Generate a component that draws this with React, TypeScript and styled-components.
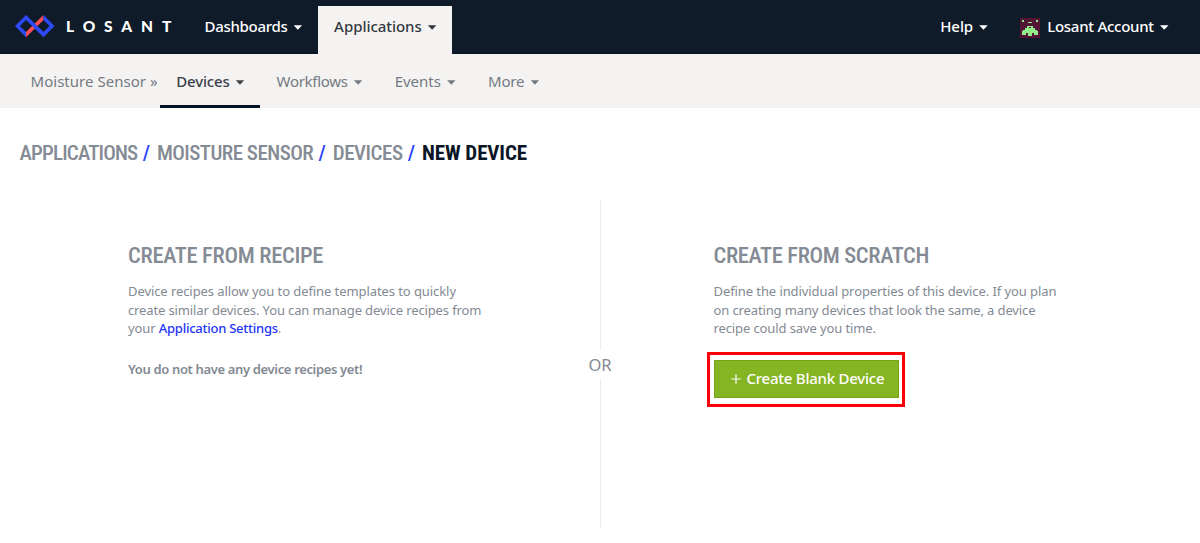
import React from "react";
import styled, { createGlobalStyle } from "styled-components";

const GlobalStyle = createGlobalStyle`
  *, *::before, *::after { box-sizing: border-box; }
  body {
    margin: 0;
    background: #fff;
    color: #838a93;
    font-family: "Noto Sans", "Open Sans", sans-serif;
    font-size: 13px;
  }
  a { color: inherit; text-decoration: none; }
`;

const Page = styled.div`
  display: flex;
  flex-direction: column;
  height: 543px;
  overflow: hidden;
`;

const Header = styled.header`
  display: flex;
  align-items: flex-end;
  height: 54px;
  flex: none;
  padding: 0 15.5px 0 15px;
  background: linear-gradient(#0f1b29 52.5px, #081625 52.5px);
`;

const Brand = styled.a`
  display: flex;
  align-items: center;
  width: 173.5px;
  height: 54px;
  padding-bottom: 1px;
  color: #fff;
`;

const Wordmark = styled.span`
  margin: 0 0 1px 11px;
  font-family: Lato, sans-serif;
  font-size: 15.5px;
  font-weight: 900;
  line-height: 20px;
  letter-spacing: 8.9px;
`;

const NavItem = styled.a<{ $active?: boolean }>`
  display: flex;
  align-items: center;
  height: 48px;
  padding: 0 16px 8px;
  color: ${(p) => (p.$active ? "#32383f" : "#fff")};
  background: ${(p) => (p.$active ? "#f5f3f2" : "transparent")};
`;

const Spacer = styled.div`
  flex: 1;
`;

const Label = styled.span<{ $track?: number; $strong?: boolean }>`
  font-size: 15px;
  line-height: 20px;
  font-weight: ${(p) => (p.$strong ? 500 : 400)};
  letter-spacing: ${(p) => p.$track ?? 0}px;
  white-space: nowrap;
`;

const Caret = styled.i`
  width: 8.5px;
  height: 4.5px;
  margin: 3px 0 0 6.2px;
  background: currentColor;
  clip-path: polygon(0 0, 100% 0, 50% 100%);
`;

const Avatar = styled.svg`
  width: 20px;
  height: 20px;
  margin: 4px 7.5px 0 0;
`;

const SubNav = styled.nav`
  display: flex;
  height: 54px;
  flex: none;
  padding-left: 30.5px;
  background: #f5f3f2;
  color: #747a82;
`;

const Context = styled.a`
  display: flex;
  align-items: center;
  width: 129.5px;
`;

const SubItem = styled.a<{ $active?: boolean }>`
  display: flex;
  align-items: center;
  padding: 3px 16px 0 16.3px;
  border-bottom: 3px solid ${(p) => (p.$active ? "#061324" : "transparent")};
  color: ${(p) => (p.$active ? "#3c4249" : "inherit")};
`;

const Breadcrumbs = styled.nav`
  display: flex;
  flex: none;
  height: 93px;
  padding: 32px 0 0 19.5px;
  font-family: "Roboto Condensed", Roboto, sans-serif;
  font-size: 21px;
  line-height: 26px;
  font-weight: 500;
`;

const Crumb = styled.a<{ $track: number; $current?: boolean }>`
  letter-spacing: ${(p) => p.$track}px;
  color: ${(p) => (p.$current ? "#0b1728" : "#858b94")};
  font-weight: ${(p) => (p.$current ? 700 : 500)};
  white-space: nowrap;
`;

const Slash = styled.span`
  width: 19.5px;
  padding-right: 1.5px;
  text-align: center;
  color: #2440fb;
`;

const Choices = styled.main`
  display: grid;
  grid-template-columns: 442px 60px 1fr;
  height: 327px;
  padding-left: 128px;
`;

const Choice = styled.section<{ $inset?: number }>`
  padding: 41px 0 0 ${(p) => p.$inset ?? 0}px;
`;

const Title = styled.h2<{ $track: number }>`
  margin: 0 0 13px;
  font-family: "Roboto Condensed", Roboto, sans-serif;
  font-size: 22.5px;
  line-height: 27px;
  font-weight: 500;
  letter-spacing: ${(p) => p.$track}px;
  color: #858b94;
`;

const Copy = styled.p`
  margin: 0;
  line-height: 18.57px;
`;

const Line = styled.span<{ $track: number }>`
  display: block;
  letter-spacing: ${(p) => p.$track}px;
  white-space: nowrap;
`;

const TextLink = styled.a`
  color: #1f36fa;
  font-weight: 500;
  letter-spacing: -0.25px;
`;

const Notice = styled.p`
  margin: 22px 0 0;
  font-weight: 600;
  line-height: 19px;
  letter-spacing: -0.35px;
`;

const Divider = styled.div`
  display: flex;
  flex-direction: column;
  align-items: center;
  color: #858b94;
  font-size: 16.5px;
  line-height: 29px;

  &::before, &::after {
    content: "";
    width: 1px;
    flex: 1;
    margin-left: 1px;
    background: #ececee;
  }
`;

const Highlight = styled.div`
  width: 198px;
  height: 55px;
  margin: 14px 0 0 -6.5px;
  padding: 5px 3.5px;
  border: 3px solid #fb0007;
`;

const Button = styled.button`
  display: flex;
  align-items: center;
  width: 185px;
  height: 38px;
  padding: 0 0 1px 16px;
  border: 1px solid #76a31c;
  background: #86b524;
  color: #fff;
  font-family: inherit;
`;

const Plus = styled.svg`
  width: 10px;
  height: 10px;
  margin: 1px 6px 0 0;
`;

const crumbs = [
  { text: "APPLICATIONS", track: -0.83 },
  { text: "MOISTURE SENSOR", track: -0.54 },
  { text: "DEVICES", track: -0.48 },
];

const sections = [
  { text: "Devices", track: -0.18, active: true },
  { text: "Workflows", track: -0.29 },
  { text: "Events", track: 0 },
  { text: "More", track: -0.12 },
];

export default function App() {
  return (
    <Page>
      <GlobalStyle />
      <Header>
        <Brand href="#">
          <svg width="40" height="23" viewBox="0 0 40 23">
            <path d="M11 17.1 28.5 0V5L11 22.3Z" fill="#fb4d55" />
            <path d="M28.5 0 39.5 11 28.5 22.2 11 5 4.9 11 11 17.1V22.3L0 11 11 0 28.5 17.1 34.6 11 28.5 5Z" fill="#2d4bfb" />
          </svg>
          <Wordmark>LOSANT</Wordmark>
        </Brand>
        <NavItem href="#">
          <Label $strong $track={-0.3}>Dashboards</Label>
          <Caret />
        </NavItem>
        <NavItem href="#" $active>
          <Label $strong $track={-0.05}>Applications</Label>
          <Caret />
        </NavItem>
        <Spacer />
        <NavItem href="#">
          <Label $strong $track={-0.1}>Help</Label>
          <Caret />
        </NavItem>
        <NavItem href="#">
          <Avatar viewBox="0 0 20 20" shapeRendering="crispEdges">
            <path d="M0 0h20v20H0z" fill="#521535" />
            <path
              d="M2 2h2v2H2zM16 2h2v2h-2zM8 4h4v1H8zM7 8h6v2h2v2h2v1h1v4h-4v-2h-2v3H8v-3H6v2H2v-4h1v-1h2v-2h2zM9 9v1h2V9z"
              fill="#8fee8a"
              fillRule="evenodd"
            />
          </Avatar>
          <Label $strong $track={-0.27}>Losant Account</Label>
          <Caret />
        </NavItem>
      </Header>

      <SubNav>
        <Context href="#">
          <Label $track={0.03}>Moisture Sensor »</Label>
        </Context>
        {sections.map((s) => (
          <SubItem key={s.text} href="#" $active={s.active}>
            <Label $strong={s.active} $track={s.track}>{s.text}</Label>
            <Caret />
          </SubItem>
        ))}
      </SubNav>

      <Breadcrumbs>
        {crumbs.map((c) => (
          <React.Fragment key={c.text}>
            <Crumb href="#" $track={c.track}>{c.text}</Crumb>
            <Slash>/</Slash>
          </React.Fragment>
        ))}
        <Crumb $track={-0.1} $current>NEW DEVICE</Crumb>
      </Breadcrumbs>

      <Choices>
        <Choice>
          <Title $track={-0.31}>CREATE FROM RECIPE</Title>
          <Copy>
            <Line $track={-0.08}>Device recipes allow you to define templates to quickly</Line>
            <Line $track={-0.125}>create similar devices. You can manage device recipes from</Line>
            <Line $track={-0.1}>
              your <TextLink href="#">Application Settings</TextLink>.
            </Line>
          </Copy>
          <Notice>You do not have any device recipes yet!</Notice>
        </Choice>
        <Divider>OR</Divider>
        <Choice $inset={83.5}>
          <Title $track={-0.35}>CREATE FROM SCRATCH</Title>
          <Copy>
            <Line $track={-0.085}>Define the individual properties of this device. If you plan</Line>
            <Line $track={-0.125}>on creating many devices that look the same, a device</Line>
            <Line $track={-0.11}>recipe could save you time.</Line>
          </Copy>
          <Highlight>
            <Button type="button">
              <Plus viewBox="0 0 10 10" fill="none" stroke="currentColor" strokeWidth="1.2">
                <path d="M5 .3v9.4M.3 5h9.4" />
              </Plus>
              <Label $strong $track={-0.24}>Create Blank Device</Label>
            </Button>
          </Highlight>
        </Choice>
      </Choices>
    </Page>
  );
}
